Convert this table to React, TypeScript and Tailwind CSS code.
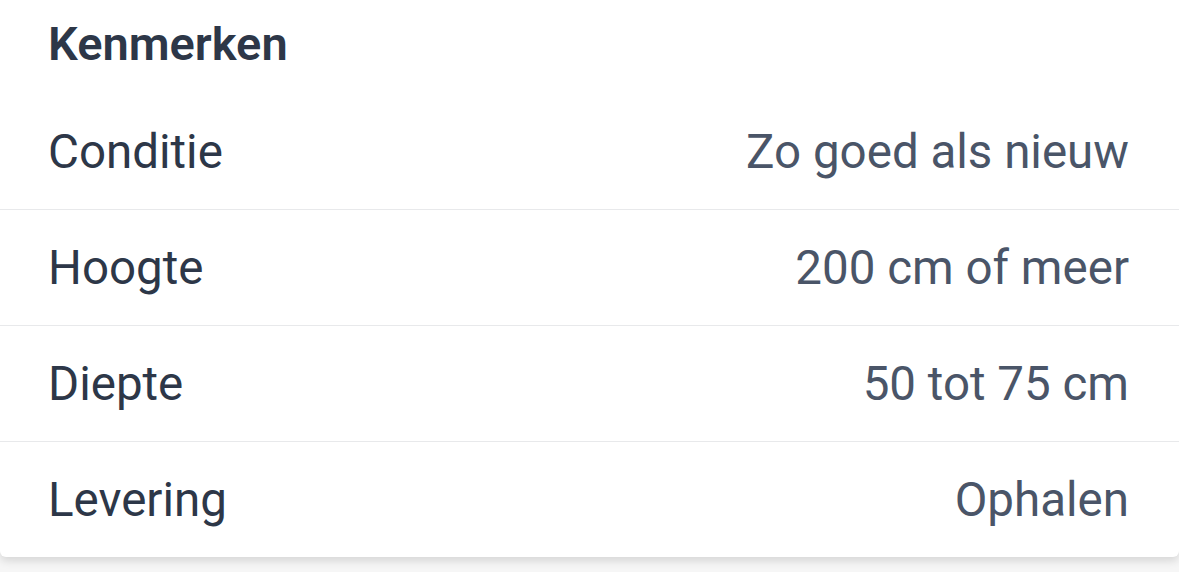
const ROWS = [
  { label: "Conditie", value: "Zo goed als nieuw" },
  { label: "Hoogte", value: "200 cm of meer" },
  { label: "Diepte", value: "50 tot 75 cm" },
  { label: "Levering", value: "Ophalen" },
];

export default function App() {
  return (
    <div className="h-[572px] w-full overflow-hidden bg-[#f6f6f6] font-['Roboto',sans-serif]">
      <div className="rounded-b-[6px] bg-white shadow-[0_4px_8px_rgba(0,0,0,0.13)]">
        <div className="flex h-[93px] items-center pl-[48px] pr-[50px] pb-[7px]">
          <h2 className="text-[47px] font-semibold leading-none text-[#2d3748]">Kenmerken</h2>
        </div>
        {ROWS.map((row, i) => (
          <div
            key={row.label}
            className={
              i === 0
                ? "flex h-[116px] items-center justify-between pl-[48px] pr-[50px] pt-[3px]"
                : "flex h-[116px] items-center justify-between border-t border-[#e8e9eb] pl-[48px] pr-[50px] pt-[3px]"
            }
          >
            <span className="text-[47.5px] leading-none text-[#2d3748]">{row.label}</span>
            <span className="text-[47.5px] leading-none text-[#4a5568]">{row.value}</span>
          </div>
        ))}
      </div>
    </div>
  );
}
